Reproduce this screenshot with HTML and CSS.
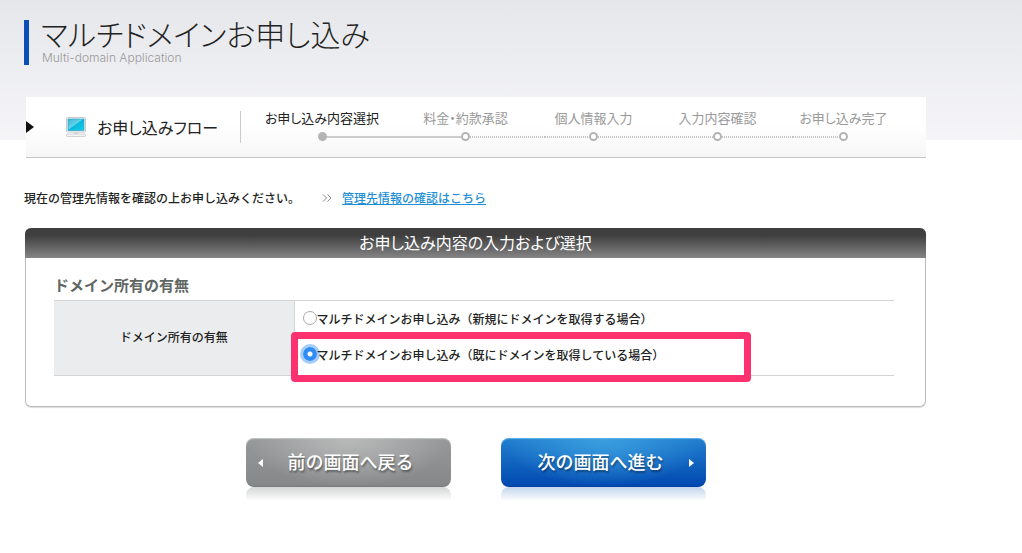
FILE: index.html
```html
<!DOCTYPE html>
<html lang="ja">
<head>
<meta charset="utf-8">
<meta name="viewport" content="width=device-width, initial-scale=1">
<title>マルチドメインお申し込み</title>
<link rel="stylesheet" href="styles.css">
</head>
<body>
<main class="page">
  <header class="page-title">
    <h1 class="page-title-main">マルチドメインお申し込み</h1>
    <p class="page-title-sub">Multi-domain Application</p>
  </header>

  <section class="flow">
    <svg class="flow-arrow" width="8" height="12" viewBox="0 0 8 12" aria-hidden="true"><path d="M0 0L8 6L0 12Z" fill="#111"/></svg>
    <svg class="flow-icon" width="20" height="20" viewBox="0 0 20 20" aria-hidden="true">
      <defs>
        <linearGradient id="screen" x1="0" y1="0" x2="1" y2="1">
          <stop offset="0" stop-color="#3fb5d6"/><stop offset=".45" stop-color="#5fd3ea"/><stop offset=".5" stop-color="#08b8dc"/><stop offset="1" stop-color="#16cdea"/>
        </linearGradient>
      </defs>
      <rect x=".5" y=".5" width="19" height="14.5" rx="1" fill="#f4f4f4" stroke="#c4cccf"/>
      <rect x="2" y="2" width="16" height="11.5" fill="url(#screen)" stroke="#2a9fbd" stroke-width=".6"/>
      <path d="M8 15.5h4v1.500H8z" fill="#ddd3cf"/>
      <rect x=".5" y="17" width="19" height="2.5" rx="1" fill="#f5f5f5" stroke="#c8c8c8" stroke-width=".8"/>
    </svg>
    <h2 class="flow-title">お申し込みフロー</h2>
    <ol class="steps">
      <li class="step step-current"><span class="step-label">お申し込み内容選択</span><span class="step-track"><i class="line line-none"></i><i class="dot"></i><i class="line line-solid"></i></span></li>
      <li class="step"><span class="step-label">料金・約款承認</span><span class="step-track"><i class="line line-solid"></i><i class="dot"></i><i class="line"></i></span></li>
      <li class="step"><span class="step-label">個人情報入力</span><span class="step-track"><i class="line"></i><i class="dot"></i><i class="line"></i></span></li>
      <li class="step"><span class="step-label">入力内容確認</span><span class="step-track"><i class="line"></i><i class="dot"></i><i class="line"></i></span></li>
      <li class="step"><span class="step-label">お申し込み完了</span><span class="step-track"><i class="line"></i><i class="dot"></i><i class="line line-none"></i></span></li>
    </ol>
  </section>

  <div class="notice">
    <p class="notice-text">現在の管理先情報を確認の上お申し込みください。</p>
    <svg class="notice-icon" width="10" height="8" viewBox="0 0 10 8" aria-hidden="true"><path d="M1 .5L4.5 4L1 7.5M5.500 .5L9 4L5.500 7.500" fill="none" stroke="#888"/></svg>
    <a class="notice-link" href="#">管理先情報の確認はこちら</a>
  </div>

  <form class="form">
    <section class="panel">
      <h2 class="panel-head">お申し込み内容の入力および選択</h2>
      <div class="panel-body">
        <h3 class="section-title">ドメイン所有の有無</h3>
        <table class="fields">
          <tr>
            <th class="field-name" scope="row">ドメイン所有の有無</th>
            <td class="field-value">
              <div class="option">
                <input class="radio" type="radio" name="domain" id="domain-new">
                <label for="domain-new">マルチドメインお申し込み（新規にドメインを取得する場合）</label>
              </div>
              <div class="option option-marked">
                <input class="radio" type="radio" name="domain" id="domain-own" checked>
                <label for="domain-own">マルチドメインお申し込み（既にドメインを取得している場合）</label>
              </div>
            </td>
          </tr>
        </table>
      </div>
    </section>
    <div class="actions">
      <button class="button button-back" type="button">
        <svg width="5" height="8" viewBox="0 0 5 8" aria-hidden="true"><path d="M5 0L0 4L5 8Z" fill="#fff"/></svg>
        <span class="button-label">前の画面へ戻る</span>
      </button>
      <button class="button button-next" type="submit">
        <span class="button-label">次の画面へ進む</span>
        <svg width="5" height="8" viewBox="0 0 5 8" aria-hidden="true"><path d="M0 0L5 4L0 8Z" fill="#fff"/></svg>
      </button>
    </div>
  </form>
</main>
</body>
</html>
```
FILE: styles.css
```css
*, *::before, *::after { box-sizing: border-box; }

body {
  margin: 0;
  background: #fff linear-gradient(#e6e7eb, #f5f5f8) no-repeat 0 0 / 100% 140px;
  color: #222;
  font: 500 12px/18px "Noto Sans CJK JP", sans-serif;
}

h1, h2, h3, p, ol { margin: 0; padding: 0; }

.page {
  max-width: 926px;
  padding: 20px 0 48px 24px;
}

.page-title {
  border-left: 5px solid #0a50b4;
  padding-left: 12px;
  height: 45px;
}

.page-title-main {
  font-size: 30px;
  font-weight: 300;
  line-height: 26px;
  font-feature-settings: "palt";
}

.page-title-sub {
  padding: 5px 0 0 1px;
  color: #999;
  font: 300 12px/14px Inter, "Liberation Sans", sans-serif;
}

.flow {
  display: flex;
  align-items: center;
  height: 61px;
  margin: 32px 0 0 2px;
  padding-right: 32px;
  border-bottom: 1px solid #c8c8c8;
  background: linear-gradient(#fff 45%, #f6f6f6);
  font-feature-settings: "palt";
}

.flow-icon { margin-left: 32px; }

.flow-title {
  width: 144px;
  margin-left: 11px;
  border-right: 1px solid #ccc;
  font-size: 16px;
  font-weight: 400;
  line-height: 32px;
}

.steps {
  flex: 1;
  display: grid;
  grid-template-columns: 128fr 159fr 97fr 151fr 101fr;
  margin-left: 17px;
  list-style: none;
}

.step {
  color: #999;
  font-size: 13px;
  font-weight: 400;
  line-height: 19px;
  text-align: center;
}

.step-current { color: #222; }

.step-label { display: block; white-space: nowrap; }

.step-track {
  display: flex;
  align-items: center;
  height: 19px;
}

.line {
  flex: 1;
  height: 2px;
  background: repeating-linear-gradient(90deg, #c4c4c4 0 1px, transparent 1px 2px);
}

.line-solid { background: #ccc; }
.line-none { background: none; }

.dot {
  width: 9px;
  height: 9px;
  border: 2px solid #b4b4b4;
  border-radius: 50%;
  background: #fff;
}

.step-current .dot { background: #b4b4b4; }

.notice {
  display: flex;
  align-items: center;
  margin: 31px 0 21px;
}

.notice-icon { margin: 0 10px 0 22px; }

.notice-link { color: #1e8fd5; }

.form { margin-left: 1px; }

.panel {
  border: 1px solid #bbb;
  border-top: 0;
  border-radius: 6px;
  box-shadow: 0 1px 1px #ddd;
}

.panel-head {
  margin: 0 -1px;
  padding-bottom: 2px;
  border-radius: 6px 6px 0 0;
  background: linear-gradient(#3f3f3f 25%, #858585);
  color: #fff;
  font-size: 16px;
  font-weight: 400;
  line-height: 28px;
  text-align: center;
  font-feature-settings: "palt";
}

.panel-body { padding: 17px 31px 30px 28px; }

.section-title {
  margin-bottom: 5px;
  color: #5f6663;
  font-size: 15px;
  font-weight: 700;
  line-height: 20px;
}

.fields {
  width: 100%;
  border-collapse: collapse;
}

.field-name, .field-value {
  border-top: 1px solid #d4d4d4;
  border-bottom: 1px solid #d4d4d4;
}

.field-name {
  width: 240px;
  padding: 0 0 2px;
  background: #ebecee;
  font-weight: 500;
}

.field-value {
  padding: 0 8px 2px;
  border-left: 1px solid #d4d4d4;
}

.option {
  position: relative;
  display: flex;
  align-items: center;
  height: 36px;
}

.radio {
  appearance: none;
  width: 14px;
  height: 14px;
  margin: 0 0 2px;
  border: 1px solid #aaa;
  border-radius: 50%;
  background: #fff;
}

.radio:checked {
  border: 0;
  background: radial-gradient(circle, #fff 2px, #308cf5 3px);
  box-shadow: 0 0 0 3px #a5cdfa;
}

.option-marked::after {
  content: "";
  position: absolute;
  top: -5px;
  left: -12px;
  width: 460px;
  height: 50px;
  border: 7px solid #fd316f;
  border-radius: 4px;
  pointer-events: none;
}

.actions {
  display: flex;
  justify-content: center;
  gap: 50px;
  margin-top: 31px;
}

.button {
  position: relative;
  display: flex;
  align-items: center;
  width: 205px;
  height: 49px;
  padding: 0 12px;
  border: 0;
  border-radius: 8px;
  color: #fff;
  font: 500 18px/24px "Noto Sans CJK JP", sans-serif;
  text-shadow: 1px 2px 2px rgba(0, 0, 0, .4);
}

.button-label {
  flex: 1;
  padding-bottom: 4px;
}

.button-back {
  background: radial-gradient(ellipse at 50% 0, #b9bbbb, transparent 70%), linear-gradient(#969899, #858788);
  box-shadow: inset 0 1px 1px #c4c6c6, inset 0 -1px 1px #7a7d7d;
}

.button-next {
  background: radial-gradient(ellipse at 50% 0, #3b9fe0, transparent 70%), linear-gradient(#227fce, #0048b0);
  box-shadow: inset 0 1px 1px #5fb2e8, inset 0 -1px 1px #0040a0;
}

/* Mirror reflection under each button */
.button::after {
  content: "";
  position: absolute;
  top: 100%;
  left: 0;
  width: 100%;
  height: 14px;
  border-radius: 8px 8px 0 0;
}

.button-back::after { background: linear-gradient(#d4d5d5, #fff); }
.button-next::after { background: linear-gradient(#c3d5ed, #fff); }
```
